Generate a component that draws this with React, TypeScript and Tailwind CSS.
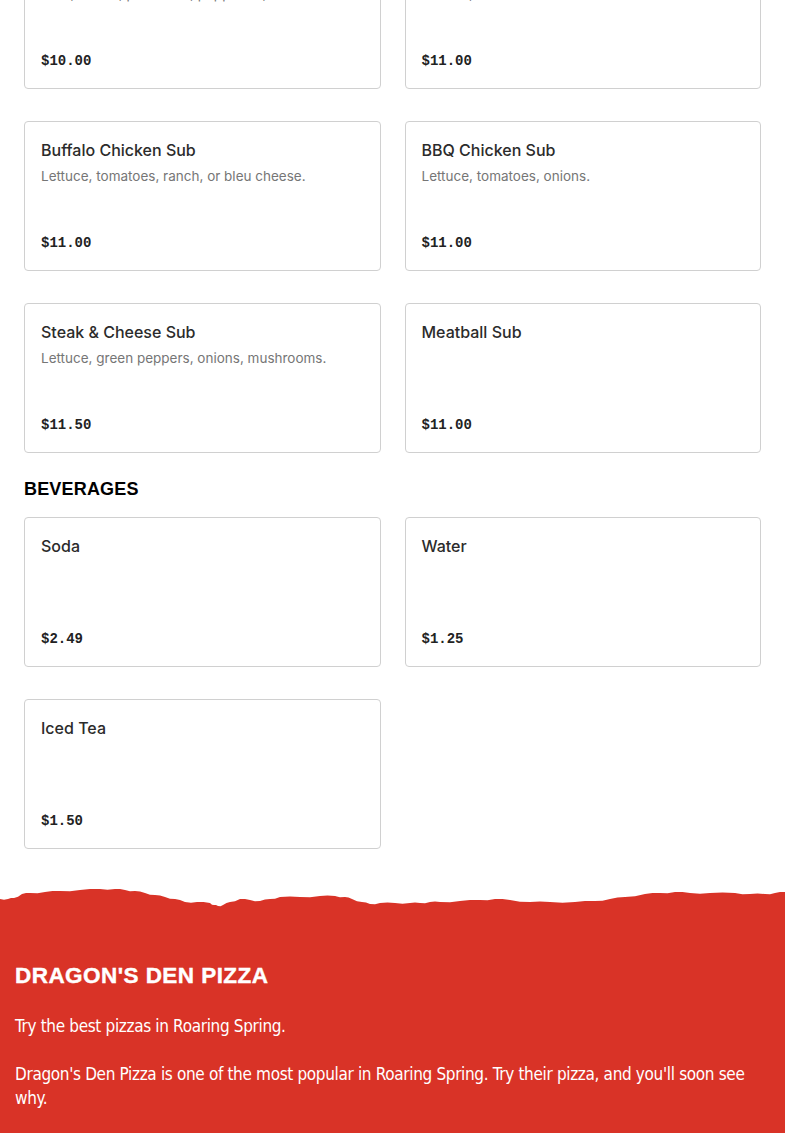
import React from "react";

type Item = { name: string; desc?: string; price: string };

const subs: Item[] = [
  { name: "Italian Sub", desc: "Ham, salami, provolone, pepperoni, onions.", price: "$10.00" },
  { name: "Ham & Cheese Sub", desc: "Lettuce, tomatoes.", price: "$11.00" },
  { name: "Buffalo Chicken Sub", desc: "Lettuce, tomatoes, ranch, or bleu cheese.", price: "$11.00" },
  { name: "BBQ Chicken Sub", desc: "Lettuce, tomatoes, onions.", price: "$11.00" },
  { name: "Steak & Cheese Sub", desc: "Lettuce, green peppers, onions, mushrooms.", price: "$11.50" },
  { name: "Meatball Sub", price: "$11.00" },
];

const beverages: Item[] = [
  { name: "Soda", price: "$2.49" },
  { name: "Water", price: "$1.25" },
  { name: "Iced Tea", price: "$1.50" },
];

function MenuCard({ item }: { item: Item }) {
  return (
    <div className="flex h-[150px] flex-col rounded border border-[#d0d0d0] bg-white px-4 pt-4 pb-[17px]">
      <h3 className="font-['Inter',sans-serif] text-[16px] font-medium leading-6 text-[#2b2b2b]">{item.name}</h3>
      {item.desc && (
        <p className="mt-1 truncate font-['Inter',sans-serif] text-[13.5px] leading-5 text-[#767676]">{item.desc}</p>
      )}
      <p className="mt-auto font-['Liberation_Mono',monospace] text-[14px] font-bold leading-5 text-[#222]">
        {item.price}
      </p>
    </div>
  );
}

// ragged paper edge above the footer
function TornEdge() {
  const pts: [number, number][] = [
    [0, 12], [8, 12], [14, 11], [22, 7], [30, 6], [45, 5], [60, 4], [80, 3], [100, 2], [115, 2],
    [125, 3], [135, 4], [145, 6], [155, 8], [165, 10], [175, 12], [185, 15], [197, 15], [210, 16],
    [214, 18], [218, 19], [223, 18], [230, 15], [240, 12], [250, 13], [260, 14], [270, 12],
    [280, 10], [300, 10], [320, 9], [335, 9], [345, 10], [352, 12], [362, 15], [370, 17],
    [380, 16], [395, 16], [410, 16], [420, 16], [430, 15], [440, 15], [460, 14], [480, 13],
    [495, 12], [510, 13], [530, 15], [550, 15], [575, 15], [595, 14], [610, 12], [625, 10],
    [645, 7], [660, 6], [675, 5], [690, 6], [710, 6], [735, 6], [750, 7], [765, 7], [775, 6], [785, 5],
  ];
  const rough: string[] = [];
  pts.forEach(([x, y], i) => {
    rough.push(`${x} ${y}`);
    const next = pts[i + 1];
    if (next) {
      const mx = (x + next[0]) / 2;
      const my = (y + next[1]) / 2 + (i % 2 === 0 ? 0.8 : -0.6);
      rough.push(`${mx} ${my}`);
    }
  });
  const d = "M0 22 L" + rough.join(" L") + " L785 22 Z";
  return (
    <svg viewBox="0 0 785 22" preserveAspectRatio="none" className="block h-[22px] w-full">
      <path d={d} fill="#d93327" />
    </svg>
  );
}

export default function App() {
  return (
    <div className="min-h-screen overflow-hidden bg-white">
      <div className="-mt-[61px] px-6 pb-[38px]">
        <div className="grid grid-cols-2 gap-x-6 gap-y-8">
          {subs.map((s) => (
            <MenuCard key={s.name} item={s} />
          ))}
        </div>

        <h2 className="mt-6 mb-4 font-['Liberation_Sans',sans-serif] text-[18px] font-bold leading-6 tracking-[0.01em] text-black">
          BEVERAGES
        </h2>
        <div className="grid grid-cols-2 gap-x-6 gap-y-8">
          {beverages.map((s) => (
            <MenuCard key={s.name} item={s} />
          ))}
        </div>
      </div>

      <footer>
        <TornEdge />
        <div className="bg-[#d93327] px-[15px] pt-[53px] pb-16 text-white">
          <h2 className="font-['Liberation_Sans',sans-serif] text-[22.5px] font-bold leading-7 tracking-[0.02em] [-webkit-text-stroke:0.4px_white]">
            DRAGON'S DEN PIZZA
          </h2>
          <p className="mt-6 font-['Liberation_Sans_Narrow','DejaVu_Sans_Condensed','Roboto',sans-serif] text-[17px] leading-6 tracking-[-0.02em]">
            Try the best pizzas in Roaring Spring.
          </p>
          <p className="mt-6 font-['Liberation_Sans_Narrow','DejaVu_Sans_Condensed','Roboto',sans-serif] text-[17px] leading-6 tracking-[-0.02em]">
            Dragon's Den Pizza is one of the most popular in Roaring Spring. Try their pizza, and you'll soon see why.
          </p>
        </div>
      </footer>
    </div>
  );
}
